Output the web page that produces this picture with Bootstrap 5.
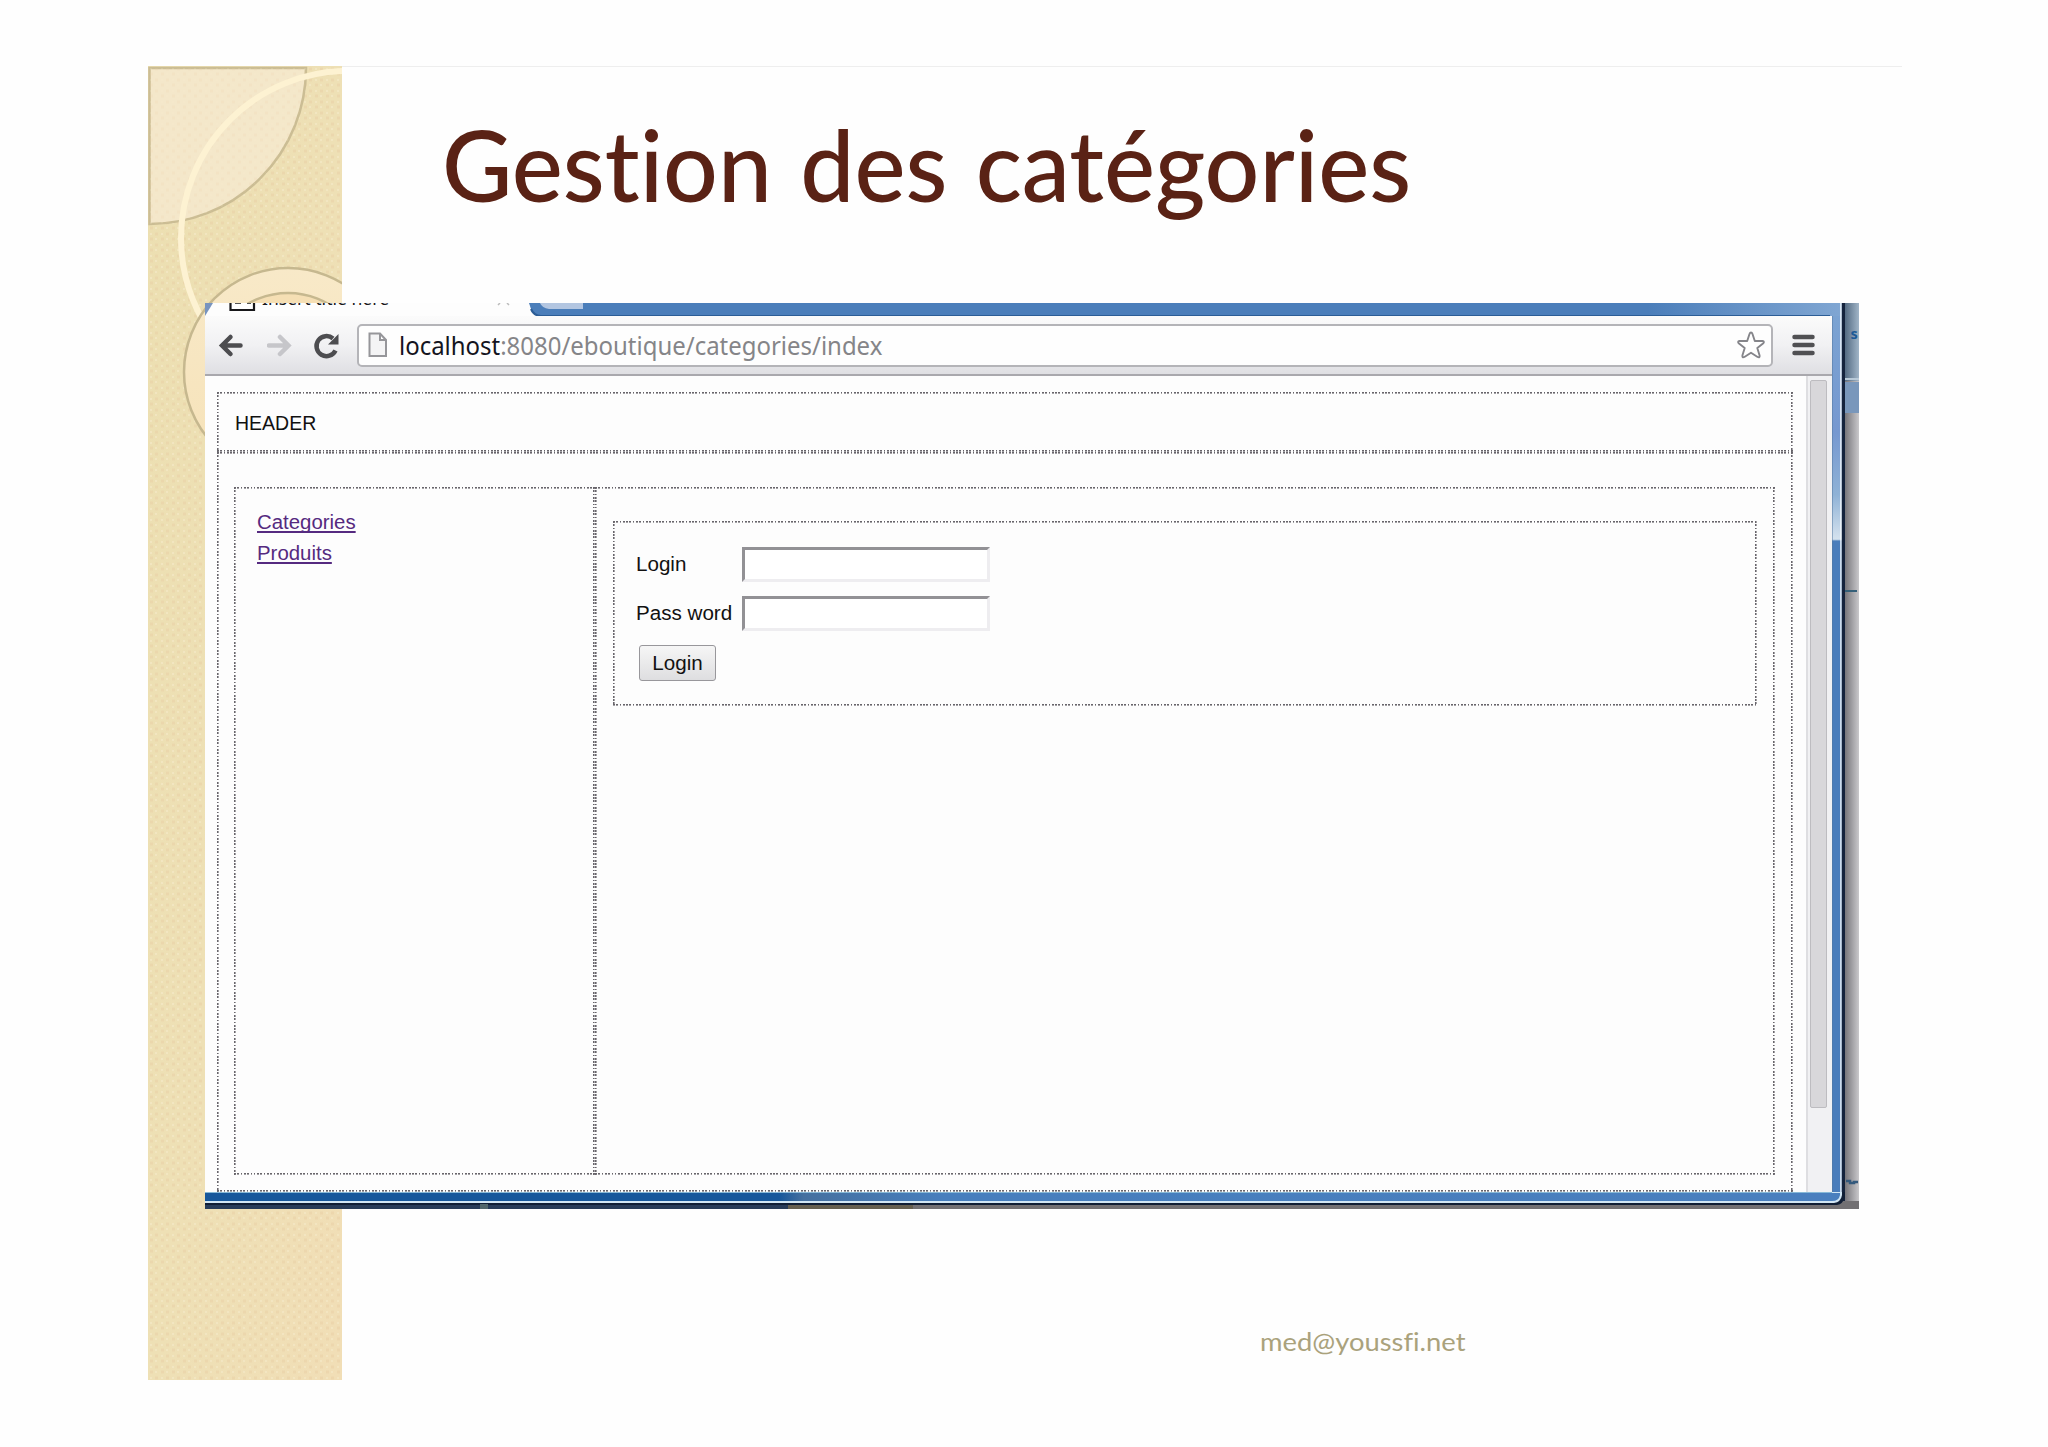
<!DOCTYPE html>
<html lang="fr">
<head>
<meta charset="utf-8">
<title>Gestion des catégories</title>
<link href="https://cdn.jsdelivr.net/npm/bootstrap@5.3.0/dist/css/bootstrap.min.css" rel="stylesheet">
<style>
body{background:#fefefe;width:2048px;height:1447px;overflow:hidden;font-family:"Liberation Sans",sans-serif;color:#111}
.slide{padding:66px 148px 0;height:1447px}
.slide-art{left:148px;top:66px;width:1754px;height:1314px}
.slide-title{height:237px;padding:33px 0 0 294px;font:500 98px/130px Lato,sans-serif;color:#5a2215;white-space:nowrap;font-variant-ligatures:none}
.fit{display:inline-block;transform-origin:0 50%;white-space:nowrap}
.fit-title{transform:scaleX(.984);word-spacing:4px}
.fit-url{transform:scaleX(.958)}
.fit-head{transform:scaleX(.975)}
.fit-link{transform:scaleX(1.02);text-decoration:underline;text-decoration-thickness:1.6px;text-underline-offset:2px;text-decoration-skip-ink:none}
.fit-label{transform:scaleX(1.03)}
.fit-foot{transform:scaleX(1.095)}
.shot{width:1654px;height:906px;margin-left:57px;background:#fdfdfd}
.win{width:1640px}
.tabs{height:13px;background:#fdfdfd}
.toolbar{height:60px;width:1627px;background:linear-gradient(#fbfbfb,#f1f1f3 50%,#dfdfe3);border-bottom:2px solid #a9a8ad;padding:0 17px 0 12px}
.omni{height:43px;width:1416px;margin-left:18px;border:2px solid #b4b4b8;border-radius:5px;background:#fefefe;padding:0 5px 0 9px}
.url{font:25px/38px "Noto Sans",sans-serif;color:#858588;margin-left:11px}
.url b{font-weight:400;color:#141420}
.page{width:1601px;padding:16px 0 0 12px}
.dots{--c:#68656b;background:
 repeating-linear-gradient(90deg,var(--c) 0 1.65px,transparent 1.65px 3.3px) 0 0/100% 1.6px no-repeat,
 repeating-linear-gradient(90deg,var(--c) 0 1.65px,transparent 1.65px 3.3px) 0 100%/100% 1.6px no-repeat,
 repeating-linear-gradient(var(--c) 0 1.65px,transparent 1.65px 3.3px) 0 0/1.6px 100% no-repeat,
 repeating-linear-gradient(var(--c) 0 1.65px,transparent 1.65px 3.3px) 100% 0/1.6px 100% no-repeat}
.outer{width:1576px}
.hd{height:60px;padding:16px 0 0 18px;font-size:20px;line-height:30px}
.bd{height:740px;padding:35px 18px 17px 17px}
.menu{width:361px;padding:20px 0 0 23px;font-size:20px;line-height:31px}
.menu a{display:block;color:#552a80}
.main{padding:34px 17px 0 18px}
.form-box{height:185px;padding:26px 0 0 23px;font-size:20px;width:1144px}
.lab{width:106px;margin-top:-1px}
.fld{width:248px;height:35px;border:3px solid;border-color:#929195 #eeedf0 #eeedf0 #929195;border-radius:0;padding:0;background:#fff}
.second{margin-top:14px}
.go{width:77px;height:36px;margin:14px 0 0 3px;border:1.5px solid #98979b;border-radius:3px;background:linear-gradient(#f6f6f6,#dedee0);font-size:20px;padding:0;color:#111;line-height:32px}
.go .fit{transform-origin:50% 50%}
.sbar{width:26px;background:#f1f1f3;border-left:2px solid #dedee1;padding:4px 0 0 2px}
.thumb{width:17px;height:728px;background:#d8d7da;border:1.5px solid #bdbcc0;border-radius:2px}
.foot{padding:110px 0 0 1112px;font:25px/44px Lato,sans-serif;color:#aaa27c;font-variant-ligatures:none}
</style>
</head>
<body>
<div class="slide position-relative">
<svg class="slide-art position-absolute" viewBox="148 66 1754 1314">
<defs>
<pattern id="weave" width="11" height="11" patternUnits="userSpaceOnUse"><path d="M1 3h3M7 8h3" stroke="#e9d0a5" stroke-width="3" opacity=".55"/><path d="M7 3h2M1 8h2" stroke="#f4e8c6" stroke-width="2" opacity=".7"/></pattern>
<linearGradient id="sand" x1="0" y1="0" x2="1" y2="1"><stop offset="0" stop-color="#ecdfb1"/><stop offset=".5" stop-color="#eee0b5"/><stop offset="1" stop-color="#f1deb6"/></linearGradient>
<linearGradient id="ring" x1="0" y1="0" x2="0" y2="1"><stop offset="0" stop-color="#f8e9c8"/><stop offset="1" stop-color="#f6e2b8"/></linearGradient>
<clipPath id="strip"><path d="M148 66h194v1314H148z"/></clipPath>
</defs>
<path d="M148 66H1902" stroke="#eeeeee" stroke-width="2"/>
<g clip-path="url(#strip)">
<path d="M148 66h194v1314H148z" fill="url(#sand)"/><path d="M148 66h194v1314H148z" fill="url(#weave)"/>
<path d="M149.500 68H306A156 156 0 0 1 149.500 224Z" fill="#f5e8cd" fill-opacity=".88" stroke="#cbbd94" stroke-width="2.500"/>
<path d="M149.500 68H306A156 156 0 0 1 149.500 224Z" fill="url(#weave)" opacity=".25"/>
<circle cx="348" cy="238" r="167" fill="none" stroke="#fdf2d2" stroke-width="6"/>
<circle cx="288" cy="372" r="104" fill="url(#ring)" stroke="#c6b88f" stroke-width="2.500"/>
<circle cx="288" cy="373" r="80" fill="#f5dfb4" stroke="#c6b88f" stroke-width="2.500"/>
</g>
</svg>
<h1 class="slide-title mb-0 position-relative"><span class="fit fit-title">Gestion des catégories</span></h1>
<div class="shot position-relative overflow-hidden d-flex">
 <div class="win d-flex flex-column">
  <div class="tabs">
   <svg class="d-block" width="1640" height="13" viewBox="0 0 1640 13">
    <defs><linearGradient id="bl"><stop offset="0" stop-color="#4b7eba"/><stop offset=".85" stop-color="#4b7eba"/><stop offset="1" stop-color="#81a7d3"/></linearGradient></defs>
    <path d="M0 0H8L0 13Z" fill="#7894bf"/>
    <path d="M324 0H1640V13H334Q327 12 324 0Z" fill="url(#bl)"/><path d="M326 6Q329 13 336 13H1625" stroke="#2c5d96" stroke-width="2" fill="none"/>
    <path d="M335 0H378V6H344Q337 5 335 0Z" fill="#b3c6e1"/>
    <path d="M25.500 0V7H49V0" fill="#fff" stroke="#17171a" stroke-width="2.200"/><path d="M30 0h6M42 0h4" stroke="#555" stroke-width="2"/>
    <text x="57" y="1.500" font-family="Noto Sans" font-size="17.500" fill="#17171a" textLength="127">Insert title here</text>
    <path d="M295 0l-2 2M302 0l2 2" stroke="#bbb" stroke-width="1.500"/>
    <path d="M1636 0v13" stroke="#f6fbff" stroke-width="1.500"/><path d="M1638.400 0v13" stroke="#14233d" stroke-width="3.200"/>
   </svg>
  </div>
  <div class="d-flex flex-grow-1">
   <div class="d-flex flex-column">
    <div class="toolbar d-flex align-items-center">
     <svg width="26" height="30" viewBox="0 0 26 30"><path d="M23.500 15.500H6M13.500 7L5 15.500l8.500 8.500" fill="none" stroke="#4d4d50" stroke-width="4.500" stroke-linecap="round"/></svg>
     <svg class="ms-4" width="26" height="30" viewBox="0 0 26 30"><path d="M2 15.500H20M13 7l8.500 8.500-8.500 8.500" fill="none" stroke="#c6c6ca" stroke-width="4.500" stroke-linecap="round"/></svg>
     <svg class="ms-3" width="30" height="30" viewBox="-4 0 30 30"><path d="M22.500 20.500A10 10 0 1 1 20 8.500" fill="none" stroke="#4d4d50" stroke-width="4.500"/><path d="M25.500 4V14.500H15Z" fill="#4d4d50"/></svg>
     <div class="omni d-flex align-items-center">
      <svg width="20" height="26" viewBox="0 0 20 26"><path d="M1.500 1.500H12L18 8V24H1.500ZM12 1.500V8H18" fill="#f4f4f5" stroke="#96969a" stroke-width="2"/></svg>
      <div class="url"><span class="fit fit-url"><b>localhost</b>:8080/eboutique/categories/index</span></div>
      <svg class="ms-auto" width="30" height="30" viewBox="0 0 30 30"><path d="M15 2.500q1 0 1.500 1.500l2.300 7h7.700q2.500.5.500 2.500l-5.700 4.500 2.300 7.500q.3 2.500-2 1.500L15 22.800 8.400 27q-2.300 1-2-1.500l2.300-7.500L3 13.500Q1 11.500 3.500 11h7.700l2.300-7q.5-1.500 1.500-1.500Z" fill="#fff" stroke="#85858a" stroke-width="1.900" stroke-linejoin="round"/></svg>
     </div>
     <svg class="ms-auto" width="23" height="24" viewBox="0 0 23 24"><path d="M2.500 4h18M2.500 12h18M2.500 20h18" stroke="#505053" stroke-width="4.500" stroke-linecap="round"/></svg>
    </div>
    <div class="d-flex flex-grow-1">
     <div class="page">
      <div class="outer">
       <div class="hd dots"><span class="fit fit-head">HEADER</span></div>
       <div class="bd dots d-flex">
        <div class="menu dots"><a href="#"><span class="fit fit-link">Categories</span></a><a href="#"><span class="fit fit-link">Produits</span></a></div>
        <div class="main dots flex-grow-1">
         <div class="form-box dots">
          <div class="d-flex align-items-center"><label class="lab" for="u"><span class="fit fit-label">Login</span></label><input id="u" class="fld"></div>
          <div class="d-flex align-items-center second"><label class="lab" for="p"><span class="fit fit-label">Pass word</span></label><input id="p" class="fld" type="password"></div>
          <button class="go d-block" type="button"><span class="fit fit-label">Login</span></button>
         </div>
        </div>
       </div>
      </div>
     </div>
     <div class="sbar"><div class="thumb"></div></div>
    </div>
   </div>
   <svg class="flex-shrink-0" width="13" height="893" viewBox="0 0 13 893">
    <defs><linearGradient id="fr" gradientUnits="userSpaceOnUse" x1="0" y1="0" x2="0" y2="893"><stop offset="0" stop-color="#7ba3d2"/><stop offset=".13" stop-color="#7698d0"/><stop offset=".2" stop-color="#8fb2d6"/><stop offset=".25" stop-color="#d5e2ee"/><stop offset=".252" stop-color="#4a7dbb"/><stop offset="1" stop-color="#4a7dbb"/></linearGradient></defs>
    <path d="M0 0h10v893H0z" fill="url(#fr)"/><path d="M.5 0v893" stroke="#54789f" opacity=".5"/><path d="M9 0v893" stroke="#f6fbff" stroke-width="1.500"/><path d="M11.400 0v893" stroke="#14233d" stroke-width="3.200"/>
   </svg>
  </div>
 </div>
 <svg width="14" height="906" viewBox="0 0 14 906">
  <defs><linearGradient id="sh"><stop offset="0" stop-color="#77767b"/><stop offset="1" stop-color="#c9c8cb"/></linearGradient><linearGradient id="sb"><stop offset="0" stop-color="#536a82"/><stop offset="1" stop-color="#a1b5c7"/></linearGradient></defs>
  <path d="M0 0h14v906H0z" fill="url(#sh)"/><path d="M0 0h14v78H0z" fill="url(#sb)"/><path d="M0 76h14" stroke="#b9cad8" stroke-width="2"/><path d="M0 79h14v31H0z" fill="#7997bb"/><path d="M0 288h12" stroke="#356079" stroke-width="2"/>
  <path d="M1 878h4v2h4v-1h4" fill="none" stroke="#34597c" stroke-width="2.500"/>
  <text x="5.500" y="36" font-family="Noto Sans" font-size="14.500" font-weight="700" fill="#1c5a97">s</text>
 </svg>
 <svg class="position-absolute bottom-0 start-0" width="1654" height="17" viewBox="0 0 1654 17">
  <defs><linearGradient id="b1" gradientUnits="userSpaceOnUse" x1="0" y1="0" x2="1640" y2="0"><stop offset="0" stop-color="#17579b"/><stop offset=".35" stop-color="#17579b"/><stop offset=".365" stop-color="#46709f"/><stop offset=".45" stop-color="#477ebd"/><stop offset="1" stop-color="#4a7fbe"/></linearGradient></defs>
  <path d="M0 9H583V17H0z" fill="#273b58"/><path d="M583 9H708V17H583z" fill="#655f50"/><path d="M708 9H1654V17H708z" fill="#727073"/>
  <path d="M0 0H1640V5Q1638 12 1632 13H0Z" fill="#101e35"/>
  <path d="M0 0H1637V3Q1636 10 1629 11H0Z" fill="#d1e6f4"/>
  <path d="M0 1H1635V3Q1634 9 1627 9H0Z" fill="url(#b1)"/><path d="M0 .5H1627" stroke="#87b9d8" stroke-width="1"/>
  <path d="M275 12h8v5h-8z" fill="#50666b"/>
 </svg>
</div>
<div class="foot"><span class="fit fit-foot">med@youssfi.net</span></div>
</div>
<script src="https://cdn.jsdelivr.net/npm/bootstrap@5.3.0/dist/js/bootstrap.bundle.min.js"></script>
</body>
</html>
